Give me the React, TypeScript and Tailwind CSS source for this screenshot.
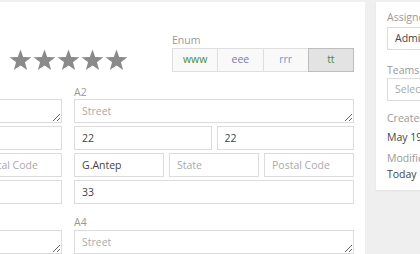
import React from 'react';

const Star = () => (
  <svg width="23" height="22" viewBox="0 0 24 23" className="shrink-0">
    <polygon
      points="12,0.5 14.8,8.4 23.3,8.6 16.6,13.8 19,22 12,17.2 5,22 7.4,13.8 0.7,8.6 9.2,8.4"
      fill="#8a8a8a"
    />
  </svg>
);

const inputCls =
  'h-[24px] w-full min-w-0 border border-[#dcdcdc] bg-white px-[7px] text-[10.5px] text-[#444] outline-none placeholder:text-[#aaa]';

function AddressColumn({ label, street, n1, n2, city, num }: { label: string; street?: string; n1?: string; n2?: string; city?: string; num?: string }) {
  return (
    <div className="flex w-[280px] shrink-0 flex-col">
      <div className="h-[14px] leading-[14px] text-[#999]">{label}</div>
      <textarea
        readOnly
        placeholder="Street"
        defaultValue={street}
        className="h-[24px] w-full border border-[#dcdcdc] px-[7px] pt-[3px] text-[10.5px] leading-[16px] text-[#444] outline-none placeholder:text-[#aaa]"
      />
      <div className="mt-[3px] flex gap-[5px]">
        <input readOnly defaultValue={n1} placeholder="City" className={inputCls} />
        <input readOnly defaultValue={n2} placeholder="" className={inputCls} />
      </div>
      <div className="mt-[3px] flex gap-[5px]">
        <input readOnly defaultValue={city} placeholder="City" className={inputCls} />
        <input readOnly placeholder="State" className={inputCls} />
        <input readOnly placeholder="Postal Code" className={inputCls} />
      </div>
      <input readOnly defaultValue={num} placeholder="Country" className={`mt-[3px] ${inputCls}`} />
    </div>
  );
}

function StreetOnly({ label }: { label: string }) {
  return (
    <div className="flex w-[280px] shrink-0 flex-col">
      <div className="mb-[1px] h-[14px] leading-[14px] text-[#999]">{label}</div>
      <textarea
        readOnly
        placeholder="Street"
        className="h-[24px] w-full border border-[#dcdcdc] px-[7px] pt-[3px] text-[10.5px] leading-[16px] text-[#444] outline-none placeholder:text-[#aaa]"
      />
    </div>
  );
}

export default function App() {
  const enumOpts = [
    { t: 'www', c: 'text-[#4b8a3c]' },
    { t: 'eee', c: 'text-[#7a78a8]' },
    { t: 'rrr', c: 'text-[#5b9bd5]' },
    { t: 'tt', c: 'text-[#4b8a3c]' },
  ];

  return (
    <div className="flex h-[254px] w-[420px] overflow-hidden bg-[#efefef] pt-[2px] font-['Open_Sans',sans-serif] text-[10.5px] text-[#444]">
      <div className="w-[365px] shrink-0 overflow-hidden bg-white">
        <div className="flex h-[83px]">
          <div className="ml-[9px] mt-[47px] flex gap-[1px]">
            <Star />
            <Star />
            <Star />
            <Star />
            <Star />
          </div>
          <div className="ml-auto mr-[11px] mt-[31px] flex flex-col">
            <div className="mb-[1px] h-[14px] leading-[14px] text-[#999]">Enum</div>
            <div className="flex w-[182px]">
              {enumOpts.map((o, i) => (
                <div
                  key={o.t}
                  className={`flex h-[24px] flex-1 items-center justify-center border ${
                    i === 3 ? 'border-[#bdbdbd] bg-[#e3e3e3]' : 'border-[#dedede] bg-[#f9f9f9]'
                  } ${i > 0 ? '-ml-px' : ''} ${o.c}`}
                >
                  {o.t}
                </div>
              ))}
            </div>
          </div>
        </div>

        <div className="ml-[-218px] flex gap-[12px]">
          <AddressColumn label="A1" />
          <AddressColumn label="A2" n1="22" n2="22" city="G.Antep" num="33" />
        </div>

        <div className="ml-[-218px] mt-[11px] flex gap-[12px]">
          <StreetOnly label="A3" />
          <StreetOnly label="A4" />
        </div>
      </div>

      <div className="ml-[11px] flex h-[188px] w-[200px] shrink-0 flex-col bg-white px-[11px] pt-[8px] shadow-[0_1px_2px_rgba(0,0,0,0.06)]">
        <div className="h-[14px] leading-[14px] text-[#999]">Assigned User</div>
        <div className="mt-[3px] flex h-[23px] items-center border border-[#dcdcdc] px-[7px] text-[#444]">Admin</div>
        <div className="mt-[13px] h-[14px] leading-[14px] text-[#999]">Teams</div>
        <div className="mt-[1px] flex h-[23px] items-center border border-[#dcdcdc] px-[7px] text-[#aaa]">Select</div>
        <div className="mt-[10px] h-[14px] leading-[14px] text-[#999]">Created</div>
        <div className="mt-[4px] h-[16px] leading-[16px] text-[#444]">May 19, 2017 10:42</div>
        <div className="mt-[6px] h-[14px] leading-[14px] text-[#999]">Modified</div>
        <div className="mt-[1px] h-[16px] leading-[16px] text-[#444]">Today 10:42</div>
      </div>
    </div>
  );
}
